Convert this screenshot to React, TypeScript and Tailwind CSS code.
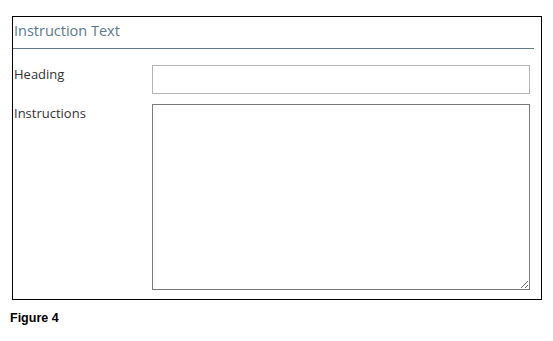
export default function App() {
  return (
    <div className="w-[553px] h-[341px] bg-white font-['Open_Sans',sans-serif]">
      <div className="pt-4 pl-3">
        <div className="w-[530px] h-[284px] border border-black flex flex-col">
          <div className="mr-[7px] h-[32px] border-b border-[#5f7a90] flex items-center">
            <span className="text-[14.5px] text-[#5b7891] leading-none pl-[1px] -mt-[2px]">Instruction Text</span>
          </div>
          <div className="flex mt-[16px] mr-[11px]">
            <div className="w-[139px] text-[13px] text-[#333] leading-none pt-[3px] pl-[1px]">Heading</div>
            <input className="flex-1 h-[29px] border border-[#b3b3b3] outline-none" />
          </div>
          <div className="flex mt-[10px] mr-[11px] mb-[8px] flex-1">
            <div className="w-[139px] text-[13px] text-[#333] leading-none pt-[3px] pl-[1px]">Instructions</div>
            <textarea className="flex-1 h-[186px] border border-[#7a7a7a] outline-none resize" />
          </div>
        </div>
      </div>
      <div className="pl-[10px] pt-[9px] text-[12.5px] font-bold text-black font-['Liberation_Sans',sans-serif]">Figure 4</div>
    </div>
  );
}
